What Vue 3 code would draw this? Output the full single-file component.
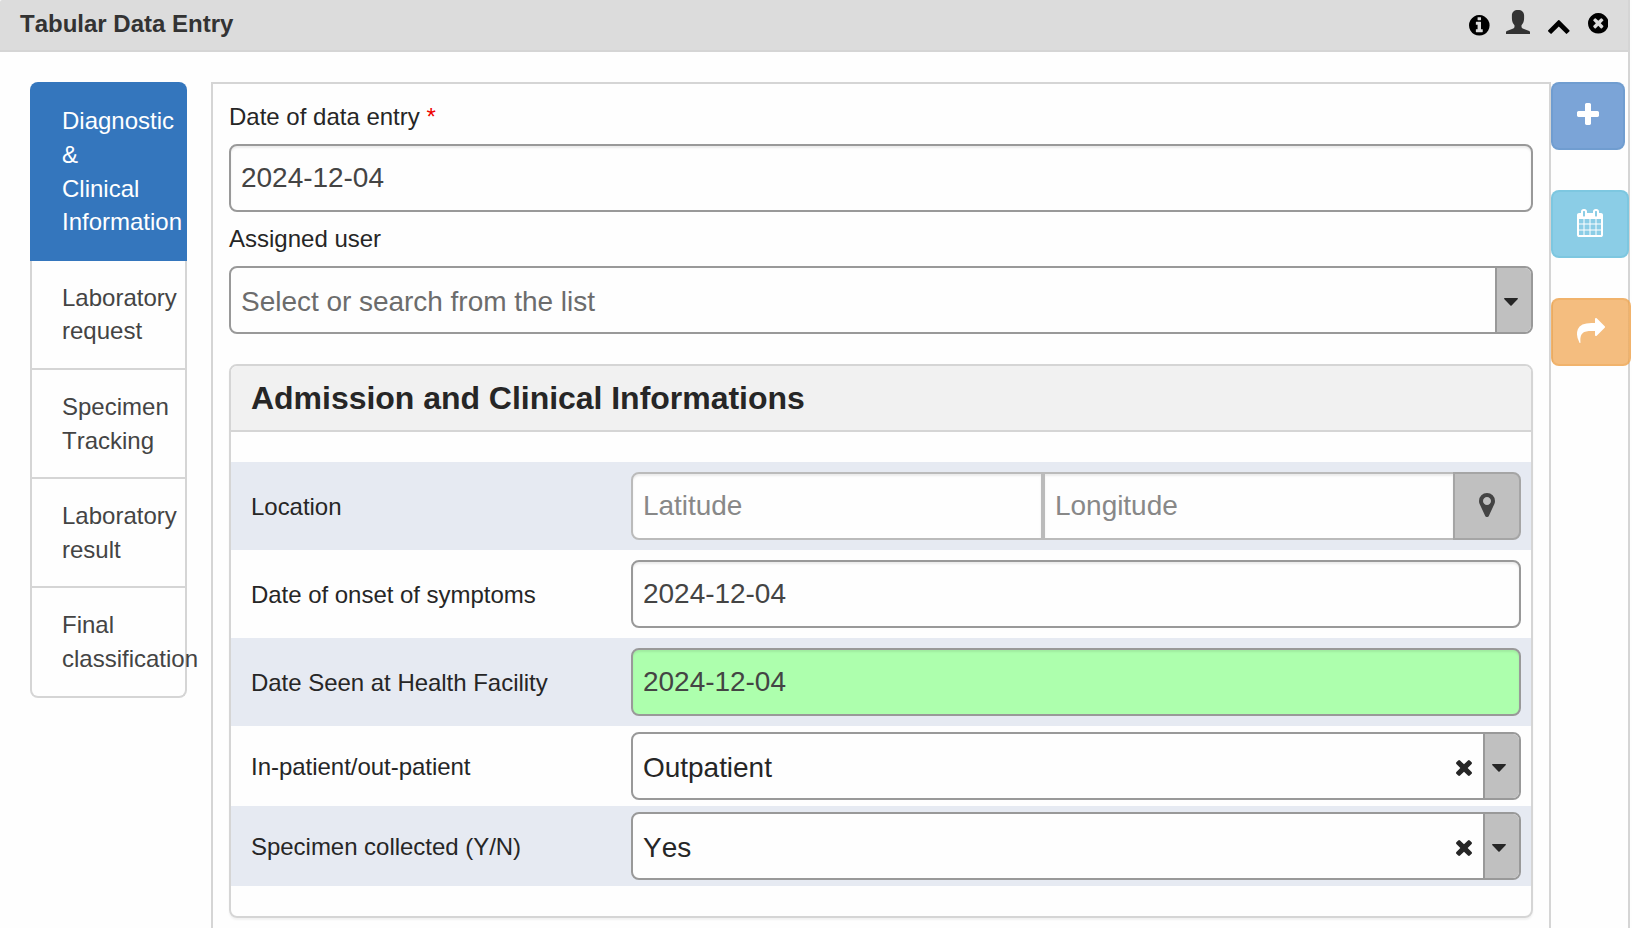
<script setup>
const tabs = [
  { lines: ['Diagnostic', '&', 'Clinical', 'Information'], active: true },
  { lines: ['Laboratory', 'request'] },
  { lines: ['Specimen', 'Tracking'] },
  { lines: ['Laboratory', 'result'] },
  { lines: ['Final', 'classification'] },
]

const rows = [
  { label: 'Location', type: 'coordinate' },
  { label: 'Date of onset of symptoms', type: 'date', value: '2024-12-04' },
  { label: 'Date Seen at Health Facility', type: 'date', value: '2024-12-04', saved: true },
  { label: 'In-patient/out-patient', type: 'select', value: 'Outpatient' },
  { label: 'Specimen collected (Y/N)', type: 'select', value: 'Yes' },
]
</script>

<template>
  <div class="page">
    <header class="titlebar">
      <h1>Tabular Data Entry</h1>
      <div class="tools">
        <svg class="t-info" viewBox="128 128 1536 1536"><path d="M1152 1376v-160q0-14-9-23t-23-9h-96v-512q0-14-9-23t-23-9h-320q-14 0-23 9t-9 23v160q0 14 9 23t23 9h96v320h-96q-14 0-23 9t-9 23v160q0 14 9 23t23 9h448q14 0 23-9t9-23zm-128-896v-160q0-14-9-23t-23-9h-192q-14 0-23 9t-9 23v160q0 14 9 23t23 9h192q14 0 23-9t9-23zm640 416q0 209-103 385.5t-279.5 279.5-385.5 103-385.5-103-279.5-279.5-103-385.5 103-385.5 279.5-279.5 385.5-103 385.5 103 279.5 279.5 103 385.5z" /></svg>
        <svg class="t-user" viewBox="0 0 24 24"><path d="M12 0C8.200 0 5.900 2 5.900 5.600v2.600c0 3 .9 5.200 2.600 7v1.600c0 .8-.4 1.300-1.200 1.600L.8 21Q0 21.300 0 22.200V24h24v-1.800q0-.9-.8-1.200l-6.500-2.600c-.8-.3-1.200-.8-1.200-1.600v-1.600c1.700-1.800 2.600-4 2.600-7V5.600C18.100 2 15.800 0 12 0z" /></svg>
        <svg class="t-up" viewBox="90 480 1612 1035"><path d="M1683 1331l-166 165q-19 19-45 19t-45-19l-531-531-531 531q-19 19-45 19t-45-19l-166-165q-19-19-19-45.5t19-45.5l742-741q19-19 45-19t45 19l742 741q19 19 19 45.5t-19 45.5z" /></svg>
        <svg class="t-close" viewBox="128 128 1536 1536"><path d="M1277 1122q0-26-19-45l-181-181 181-181q19-19 19-45 0-27-19-46l-90-90q-19-19-46-19-26 0-45 19l-181 181-181-181q-19-19-45-19-27 0-46 19l-90 90q-19 19-19 46 0 26 19 45l181 181-181 181q-19 19-19 45 0 27 19 46l90 90q19 19 46 19 26 0 45-19l181-181 181 181q19 19 45 19 27 0 46-19l90-90q19-19 19-46zm387-226q0 209-103 385.5t-279.5 279.5-385.5 103-385.5-103-279.5-279.5-103-385.5 103-385.5 279.5-279.5 385.5-103 385.5 103 279.5 279.5 103 385.5z" /></svg>
      </div>
    </header>

    <main class="content">
      <nav class="tabs">
        <a v-for="(tab, i) in tabs" :key="i" class="tab" :class="{ active: tab.active }">
          <span v-for="line in tab.lines" :key="line">{{ line }}</span>
        </a>
      </nav>

      <section class="form">
        <label class="label">Date of data entry <span class="required">*</span></label>
        <div class="input">2024-12-04</div>
        <label class="label second">Assigned user</label>
        <div class="select">
          <span class="text placeholder">Select or search from the list</span>
          <span class="drop"><svg viewBox="0 0 14 8"><path d="M.6 0h12.800q.9.500.2 1.200L7.600 7.500q-.6.600-1.200 0L.4 1.200Q-.3.500.6 0z" /></svg></span>
        </div>

        <div class="panel">
          <h2>Admission and Clinical Informations</h2>
          <div class="rows">
            <div v-for="row in rows" :key="row.label" class="row" :class="row.type">
              <span class="row-label">{{ row.label }}</span>
              <div v-if="row.type === 'coordinate'" class="group">
                <div class="input coord first">Latitude</div>
                <div class="input coord">Longitude</div>
                <div class="locate">
                  <svg viewBox="384 128 1024 1536"><path d="M1152 640q0-106-75-181t-181-75-181 75-75 181 75 181 181 75 181-75 75-181zm256 0q0 109-33 179l-364 774q-16 33-47.5 52t-67.5 19-67.5-19-46.5-52l-365-774q-33-70-33-179 0-212 150-362t362-150 362 150 150 362z" /></svg>
                </div>
              </div>
              <div v-else-if="row.type === 'date'" class="input" :class="{ saved: row.saved }">{{ row.value }}</div>
              <div v-else class="select">
                <span class="text">{{ row.value }}</span>
                <svg class="clear" viewBox="302 366 1188 1188"><path d="M1490 1322q0 40-28 68l-136 136q-28 28-68 28t-68-28l-294-294-294 294q-28 28-68 28t-68-28l-136-136q-28-28-28-68t28-68l294-294-294-294q-28-28-28-68t28-68l136-136q28-28 68-28t68 28l294 294 294-294q28-28 68-28t68 28l136 136q28 28 28 68t-28 68l-294 294 294 294q28 28 28 68z" /></svg>
                <span class="drop"><svg viewBox="0 0 14 8"><path d="M.6 0h12.800q.9.500.2 1.200L7.600 7.500q-.6.600-1.200 0L.4 1.200Q-.3.500.6 0z" /></svg></span>
              </div>
            </div>
          </div>
        </div>
      </section>

      <aside class="actions">
        <button class="btn add">
          <svg viewBox="192 128 1408 1408"><path d="M1600 736v192q0 40-28 68t-68 28h-416v416q0 40-28 68t-68 28h-192q-40 0-68-28t-28-68v-416h-416q-40 0-68-28t-28-68v-192q0-40 28-68t68-28h416v-416q0-40 28-68t68-28h192q40 0 68 28t28 68v416h416q40 0 68 28t28 68z" /></svg>
        </button>
        <button class="btn schedule">
          <svg viewBox="64 0 1664 1792"><path d="M192 1664h288v-288h-288v288zm352 0h320v-288h-320v288zm-352-352h288v-320h-288v320zm352 0h320v-320h-320v320zm-352-384h288v-288h-288v288zm736 736h320v-288h-320v288zm-384-736h320v-288h-320v288zm768 736h288v-288h-288v288zm-384-352h320v-320h-320v320zm-352-864v-288q0-13-9.500-22.500t-22.500-9.500h-64q-13 0-22.500 9.500t-9.500 22.500v288q0 13 9.500 22.500t22.500 9.500h64q13 0 22.500-9.500t9.500-22.500zm736 864h288v-320h-288v320zm-384-384h320v-288h-320v288zm384 0h288v-288h-288v288zm32-480v-288q0-13-9.500-22.500t-22.500-9.500h-64q-13 0-22.500 9.500t-9.500 22.500v288q0 13 9.500 22.500t22.500 9.500h64q13 0 22.500-9.500t9.500-22.500zm384-64v1280q0 52-38 90t-90 38h-1408q-52 0-90-38t-38-90v-1280q0-52 38-90t90-38h128v-96q0-66 47-113t113-47h64q66 0 113 47t47 113v96h384v-96q0-66 47-113t113-47h64q66 0 113 47t47 113v96h128q52 0 90 38t38 90z" /></svg>
        </button>
        <button class="btn refer">
          <svg viewBox="0 64 1792 1600"><path d="M1792 640q0 26-19 45l-512 512q-19 19-45 19t-45-19-19-45v-256h-224q-98 0-175.500 6t-154 21.500-133 42.500-105.500 69.500-80 101-48.500 138.500-17.500 181q0 55 5 123 0 6 2.500 23.500t2.500 26.500q0 15-8.500 25t-23.500 10q-16 0-28-17-7-9-13-22t-13.500-30-10.500-24q-127-285-127-451 0-199 53-333 162-403 875-403h224v-256q0-26 19-45t45-19 45 19l512 512q19 19 19 45z" /></svg>
        </button>
      </aside>
    </main>
  </div>
</template>

<style>
body {
  background: #fefefe;
  overflow: hidden;
}
</style>

<style scoped>
* {
  box-sizing: border-box;
}
.page {
  width: 1630px;
  height: 928px;
  border-right: 2px solid #d5d5d5;
  font-family: 'Liberation Sans', Arial, sans-serif;
  font-size: 24px;
  font-kerning: none;
  line-height: 33.6px;
  color: #262626;
  display: flex;
  flex-direction: column;
}
svg {
  display: block;
  fill: currentColor;
  flex: none;
}
.titlebar {
  height: 52px;
  flex: none;
  display: flex;
  justify-content: space-between;
  padding: 7px 19.800px 0 20px;
  background: #dcdcdc;
  border-bottom: 2px solid #d5d5d5;
  border-top-left-radius: 2px;
}
h1 {
  margin: 0;
  font-size: 24px;
  line-height: 34px;
  font-weight: bold;
  color: #333;
}
.tools {
  display: flex;
  align-items: flex-start;
  color: #000;
}
.t-info { width: 20.600px; height: 20.600px; margin: 8px 16.400px 0 0; }
.t-user { width: 24px; height: 24px; margin: 3px 18px 0 0; color: #333; }
.t-up { width: 21.600px; height: 13.900px; margin: 13px 18px 0 0; }
.t-close { width: 20.600px; height: 20.600px; margin-top: 6px; }

.content {
  flex: 1;
  min-height: 0;
  display: flex;
  align-items: stretch;
  padding: 30px 0 0 30px;
}
.tabs {
  width: 157px;
  flex: none;
  margin-right: 24px;
}
.tab {
  display: flex;
  flex-direction: column;
  height: 109px;
  padding: 20.400px 0 0 30px;
  border: 2px solid #d5d5d5;
  border-top: 0;
  color: #444;
  white-space: nowrap;
}
.tab:nth-child(2) {
  padding-top: 19.800px;
}
.tab.active {
  height: 179px;
  padding: 22.400px 0 0 32px;
  border: 0;
  border-radius: 8px 8px 0 0;
  background: #3476bd;
  color: #fff;
}
.tab:last-child {
  height: 110px;
  border-radius: 0 0 8px 8px;
}
.form {
  width: 1340px;
  flex: none;
  height: 860px;
  padding: 16px;
  border: 2px solid #d5d5d5;
}
.label {
  display: block;
  height: 44px;
  line-height: 34px;
}
.label.second {
  margin-top: 10px;
}
.required {
  color: #ee0000;
}
.input {
  height: 68px;
  padding: 0 10px 1px;
  border: 2px solid #999;
  border-radius: 8px;
  background: #fefefe;
  box-shadow: inset 0 2px 2px rgba(0, 0, 0, 0.075);
  font-size: 28px;
  letter-spacing: -0.03px;
  line-height: 63px;
  color: #444;
}
.input.saved {
  background-color: #adffad;
}
.select {
  display: flex;
  align-items: center;
  height: 68px;
  padding-left: 10px;
  border: 2px solid #999;
  border-radius: 8px;
  background: #fefefe;
  overflow: hidden;
  font-size: 28px;
  letter-spacing: -0.03px;
}
.text {
  flex: 1;
  padding-top: 3px;
}
.placeholder {
  color: #6c6c6c;
}
.clear {
  width: 16px;
  height: 16px;
  margin: 4px 11.400px 0 0;
}
.drop {
  align-self: stretch;
  width: 36px;
  padding: 29.800px 0 0 7.400px;
  border-left: 2px solid #999;
  background: #c0c0c0;
}
.drop svg {
  width: 14px;
  height: 8px;
}
.panel {
  height: 554px;
  margin-top: 30px;
  border: 2px solid #d5d5d5;
  border-radius: 8px;
  box-shadow: 0 2px 2px rgba(0, 0, 0, 0.05);
}
h2 {
  margin: 0;
  height: 66px;
  padding-left: 20px;
  border-bottom: 2px solid #d5d5d5;
  border-radius: 6px 6px 0 0;
  background: #f1f1f1;
  font-size: 32px;
  letter-spacing: -0.03px;
  line-height: 64px;
  font-weight: bold;
}
.rows {
  padding-top: 30px;
}
.row {
  display: grid;
  grid-template-columns: 380px 890px;
  align-items: center;
  height: 88px;
  padding-left: 20px;
}
.row.select {
  height: 80px;
  border: 0;
  border-radius: 0;
  font-size: 24px;
}
.row:nth-child(odd) {
  background: #e6eaf2;
}
.row:nth-child(4) {
  background: none;
}
.row-label {
  padding-top: 2px;
  letter-spacing: -0.03px;
  line-height: 34px;
}
.row .select .text {
  line-height: 34px;
}
.group {
  display: flex;
}
.coord {
  width: 412px;
  border-color: #bbb;
  border-radius: 0;
  color: #888;
}
.coord.first {
  border-radius: 8px 0 0 8px;
}
.locate {
  width: 68px;
  height: 68px;
  margin-left: -2px;
  padding: 18.500px 0 0 23.600px;
  border: 2px solid #a5a5a5;
  border-radius: 0 8px 8px 0;
  background: #c0c0c0;
  color: #444;
}
.locate svg {
  width: 16px;
  height: 24px;
}
.actions {
  width: 80px;
  flex: none;
  display: flex;
  flex-direction: column;
  align-items: flex-start;
  gap: 40px;
}
.btn {
  height: 68px;
  display: flex;
  align-items: flex-start;
  padding: 0 0 0 24px;
  border: 2px solid rgba(51, 122, 170, 0.14);
  border-radius: 8px;
  color: #fff;
}
.add { width: 74px; background: #7ba4d7; }
.add svg { width: 22px; height: 22px; margin-top: 18.800px; }
.schedule { width: 78px; background: #8bcde6; border-color: rgba(60, 170, 200, 0.18); }
.schedule svg { width: 26px; height: 28px; margin-top: 17.200px; }
.refer {
  width: 80px;
  background: linear-gradient(to right, transparent 75px, rgba(160, 100, 20, 0.12) 75px 77px, transparent 77px), #f4bd7f;
  border-color: rgba(230, 150, 50, 0.25);
}
.refer svg { width: 28px; height: 25px; margin-top: 17.700px; }
</style>
